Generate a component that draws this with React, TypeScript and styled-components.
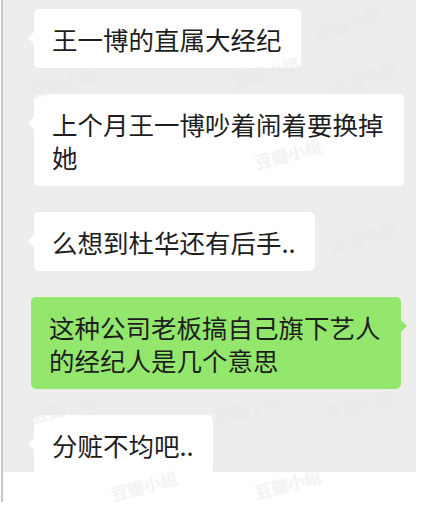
import React from 'react';
import styled, { createGlobalStyle, css } from 'styled-components';

const GlobalStyle = createGlobalStyle`
  html, body {
    margin: 0;
    padding: 0;
    background: #ffffff;
  }
  body {
    font-family: "Noto Sans CJK SC", "Noto Sans", sans-serif;
  }
`;

const Page = styled.div`
  position: relative;
  width: 422px;
  height: 508px;
  overflow: hidden;
  background: #ffffff;
`;

const Frame = styled.div`
  margin-left: 1px;
  height: 502px;
  border-left: 2px solid #c6c6c6;
`;

const ChatArea = styled.div`
  width: 413px;
  height: 463px;
  padding-top: 9px;
  background: #ededed;
  display: flex;
  flex-direction: column;
  gap: 26px;
  box-sizing: content-box;
`;

const Row = styled.div<{ $mine?: boolean }>`
  display: flex;
  justify-content: ${p => (p.$mine ? 'flex-end' : 'flex-start')};
  padding: ${p => (p.$mine ? '0 15px 0 0' : '0 0 0 31px')};
`;

const Bubble = styled.div<{ $mine?: boolean }>`
  position: relative;
  max-width: 370px;
  box-sizing: border-box;
  padding: 13px 19px 13px 18px;
  border-radius: 5px;
  font-size: 25.5px;
  line-height: 33px;
  color: #1e1e1e;
  background: ${p => (p.$mine ? '#92e76c' : '#ffffff')};

  &::before {
    content: '';
    position: absolute;
    top: 23px;
    border: 6px solid transparent;
    ${p =>
      p.$mine
        ? css`
            right: -12px;
            border-left-color: #92e76c;
          `
        : css`
            left: -12px;
            border-right-color: #ffffff;
          `}
  }
`;

const Watermark = styled.span`
  position: absolute;
  font-size: 17px;
  font-weight: 700;
  line-height: 20px;
  color: rgba(255, 255, 255, 0.45);
  text-shadow: 0 0 1px rgba(170, 170, 170, 0.25);
  transform: rotate(-15deg);
  white-space: nowrap;
  pointer-events: none;
`;

const messages = [
  { text: '王一博的直属大经纪', mine: false },
  { text: '上个月王一博吵着闹着要换掉她', mine: false },
  { text: '么想到杜华还有后手..', mine: false },
  { text: '这种公司老板搞自己旗下艺人的经纪人是几个意思', mine: true },
  { text: '分赃不均吧..', mine: false },
];

const marks = [
  { x: 314, y: 14 },
  { x: 30, y: 72 },
  { x: 232, y: 62 },
  { x: 330, y: 68 },
  { x: 254, y: 144 },
  { x: 330, y: 228 },
  { x: 30, y: 398 },
  { x: 214, y: 398 },
  { x: 326, y: 396 },
  { x: 254, y: 474 },
  { x: 110, y: 476 },
];

export default function App() {
  return (
    <Page>
      <GlobalStyle />
      <Frame>
        <ChatArea>
          {messages.map((m, i) => (
            <Row key={i} $mine={m.mine}>
              <Bubble $mine={m.mine}>{m.text}</Bubble>
            </Row>
          ))}
        </ChatArea>
      </Frame>
      {marks.map((w, i) => (
        <Watermark key={i} style={{ left: w.x, top: w.y }}>
          豆瓣小组
        </Watermark>
      ))}
    </Page>
  );
}
